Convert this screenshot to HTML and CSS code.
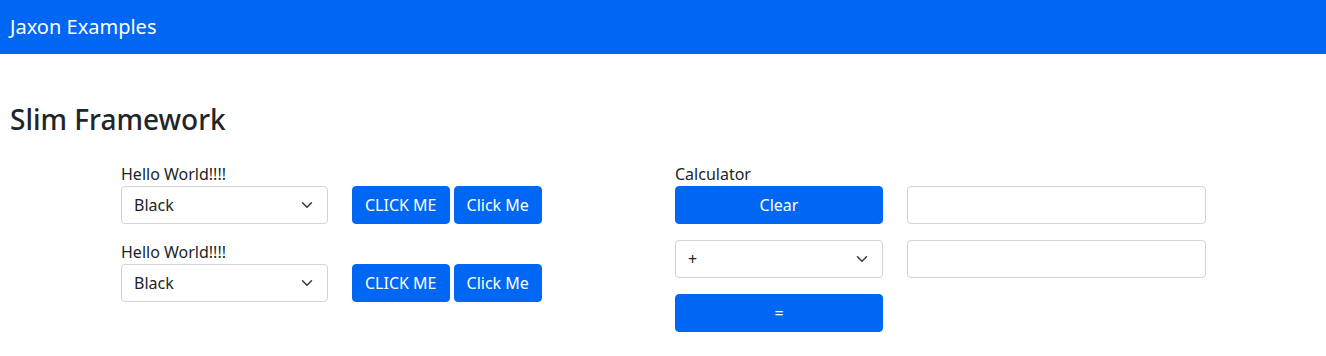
FILE: index.html
```html
<!DOCTYPE html>
<html lang="en">
<head>
<meta charset="utf-8">
<title>Jaxon Examples</title>
<link rel="stylesheet" href="styles.css">
</head>
<body>
<nav class="navbar"><span class="brand">Jaxon Examples</span></nav>
<main class="content">
  <h1 class="title">Slim Framework</h1>
  <div class="panels">
    <div class="hello">
      <div class="hello-row">
        <label class="lbl">Hello World!!!!</label>
        <div class="controls">
          <select class="form-select sel-color"><option>Black</option><option>Red</option><option>Green</option><option>Blue</option></select>
          <div class="btns">
            <button class="btn">CLICK ME</button>
            <button class="btn">Click Me</button>
          </div>
        </div>
      </div>
      <div class="hello-row">
        <label class="lbl">Hello World!!!!</label>
        <div class="controls">
          <select class="form-select sel-color"><option>Black</option><option>Red</option><option>Green</option><option>Blue</option></select>
          <div class="btns">
            <button class="btn">CLICK ME</button>
            <button class="btn">Click Me</button>
          </div>
        </div>
      </div>
    </div>
    <div class="calc">
      <div class="calc-cell">
        <label class="lbl">Calculator</label>
        <button class="btn btn-block">Clear</button>
      </div>
      <input class="form-control" type="text">
      <select class="form-select"><option>+</option><option>-</option><option>*</option><option>/</option></select>
      <input class="form-control" type="text">
      <button class="btn btn-block btn-eq">=</button>
    </div>
  </div>
</main>
</body>
</html>
```
FILE: styles.css
```css
* { box-sizing: border-box; }
body {
  margin: 0;
  font-family: "Noto Sans", "Liberation Sans", sans-serif;
  font-size: 16px;
  line-height: 1.5;
  color: #212529;
  background: #fff;
}
.navbar {
  background: #0067f5;
  height: 54px;
  display: flex;
  align-items: center;
  padding: 0 10px;
}
.brand {
  color: #fff;
  font-size: 20px;
  line-height: 30px;
}
.content {
  padding: 0 10px;
}
.title {
  font-size: 28px;
  font-weight: 500;
  line-height: 1.2;
  margin: 49px 0 25px;
}
.panels {
  display: flex;
  padding-left: 111px;
}
.hello {
  width: 554px;
  display: flex;
  flex-direction: column;
  gap: 16px;
}
.lbl {
  display: block;
  line-height: 24px;
}
.controls {
  display: flex;
  align-items: center;
  gap: 24px;
}
.btns {
  display: flex;
  gap: 4px;
}
.form-select {
  appearance: none;
  -webkit-appearance: none;
  display: block;
  width: 208px;
  height: 38px;
  padding: 6px 36px 6px 12px;
  font-family: inherit;
  font-size: 16px;
  line-height: 24px;
  color: #212529;
  background-color: #fff;
  background-image: url("data:image/svg+xml,%3csvg xmlns='http://www.w3.org/2000/svg' viewBox='0 0 16 16'%3e%3cpath fill='none' stroke='%23343a40' stroke-linecap='round' stroke-linejoin='round' stroke-width='2' d='m2 5 6 6 6-6'/%3e%3c/svg%3e");
  background-repeat: no-repeat;
  background-position: right 12px center;
  background-size: 16px 12px;
  border: 1px solid #ced4da;
  border-radius: 4px;
}
.sel-color { width: 207px; }
.form-control {
  display: block;
  width: 299px;
  height: 38px;
  padding: 6px 12px;
  font-family: inherit;
  font-size: 16px;
  border: 1px solid #ced4da;
  border-radius: 4px;
  background: #fff;
}
.btn {
  height: 38px;
  padding: 6px 12px;
  font-family: inherit;
  font-size: 16px;
  line-height: 24px;
  color: #fff;
  background: #0067f5;
  border: 1px solid #0067f5;
  border-radius: 4px;
  cursor: pointer;
}
.btn-block {
  display: block;
  width: 208px;
}
.calc {
  display: grid;
  grid-template-columns: 208px 299px;
  column-gap: 24px;
  row-gap: 16px;
  align-items: end;
}
.btn-eq {
  grid-column: 1;
}
```
